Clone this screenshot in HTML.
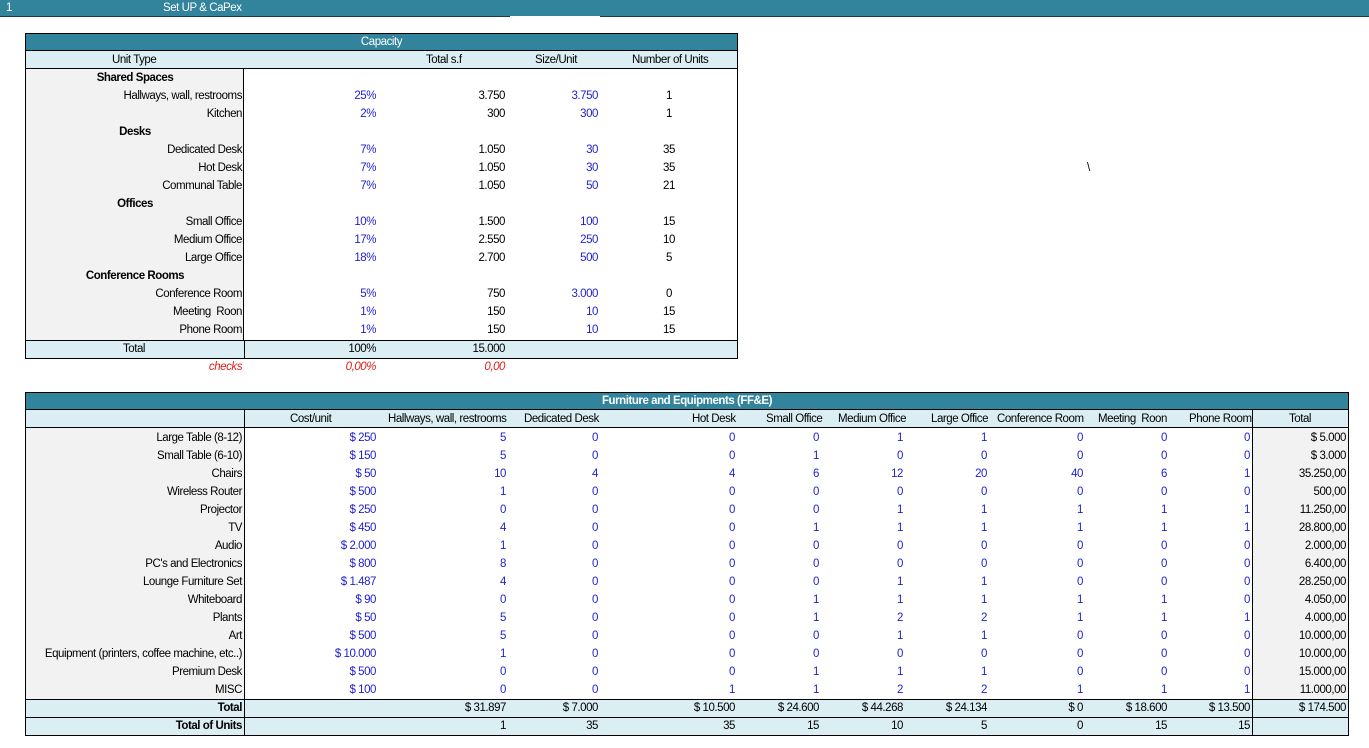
<!DOCTYPE html>
<html><head><meta charset="utf-8"><style>
*{margin:0;padding:0;box-sizing:border-box}
body{width:1369px;height:748px;background:#fff;position:relative;overflow:hidden;font-family:"Liberation Sans",Arial,sans-serif;font-size:11.5px;letter-spacing:-0.45px;color:#000}
.a{position:absolute}
.r{position:absolute;left:0;width:1369px;height:18px;line-height:18px}
.r span{position:absolute;white-space:nowrap}
.b{color:#1f1fd0}
.lab{right:1127px}
.sec{left:25px;width:220px;text-align:center;font-weight:bold}
.p1{right:993px}.p2{right:864px}.p3{right:771px}.p4{left:629px;width:80px;text-align:center}
.f1{right:993px}.f2{right:863px}.f3{right:771px}.f4{right:634px}.f5{right:550px}.f6{right:466px}.f7{right:382px}.f8{right:286px}.f9{right:202px}.f10{right:119px}.f11{right:23px}
</style></head><body>
<div class="a" style="left:0;top:0;width:1369px;height:17px;background:#31849b;border-bottom:1px solid #1a3a44"></div>
<div class="a" style="left:510px;top:16px;width:90px;height:2px;background:#fff"></div>
<div class="a" style="left:6px;top:0;line-height:17px;color:#fff">1</div>
<div class="a" style="left:163px;top:0;line-height:17px;color:#fff">Set UP &amp; CaPex</div>

<!-- Capacity -->
<div class="a" style="left:25px;top:33px;width:713px;height:326px;border:1px solid #000"></div>
<div class="a" style="left:26px;top:34px;width:711px;height:17px;background:#31849b;color:#fff;text-align:center;line-height:17px;border-bottom:1px solid #000">Capacity</div>
<div class="a" style="left:26px;top:51px;width:711px;height:18px;background:#daeef3;border-bottom:1px solid #000"></div>
<div class="a" style="left:26px;top:69px;width:218px;height:271px;background:#f2f2f2;border-right:1px solid #000"></div>
<div class="a" style="left:26px;top:340px;width:711px;height:18px;background:#daeef3;border-top:1px solid #000"></div>
<div class="a" style="left:244px;top:340px;width:1px;height:18px;background:#000"></div>
<div class="r" style="top:51px"><span style="left:112px">Unit Type</span><span style="left:426px">Total s.f</span><span style="left:535px">Size/Unit</span><span style="left:632px">Number of Units</span></div>
<div class="r" style="top:69px"><span class="sec">Shared Spaces</span></div>
<div class="r" style="top:87px"><span class="lab">Hallways, wall, restrooms</span><span class="p1 b">25%</span><span class="p2">3.750</span><span class="p3 b">3.750</span><span class="p4">1</span></div>
<div class="r" style="top:105px"><span class="lab">Kitchen</span><span class="p1 b">2%</span><span class="p2">300</span><span class="p3 b">300</span><span class="p4">1</span></div>
<div class="r" style="top:123px"><span class="sec">Desks</span></div>
<div class="r" style="top:141px"><span class="lab">Dedicated Desk</span><span class="p1 b">7%</span><span class="p2">1.050</span><span class="p3 b">30</span><span class="p4">35</span></div>
<div class="r" style="top:159px"><span class="lab">Hot Desk</span><span class="p1 b">7%</span><span class="p2">1.050</span><span class="p3 b">30</span><span class="p4">35</span><span style="left:1087px">\</span></div>
<div class="r" style="top:177px"><span class="lab">Communal Table</span><span class="p1 b">7%</span><span class="p2">1.050</span><span class="p3 b">50</span><span class="p4">21</span></div>
<div class="r" style="top:195px"><span class="sec">Offices</span></div>
<div class="r" style="top:213px"><span class="lab">Small Office</span><span class="p1 b">10%</span><span class="p2">1.500</span><span class="p3 b">100</span><span class="p4">15</span></div>
<div class="r" style="top:231px"><span class="lab">Medium Office</span><span class="p1 b">17%</span><span class="p2">2.550</span><span class="p3 b">250</span><span class="p4">10</span></div>
<div class="r" style="top:249px"><span class="lab">Large Office</span><span class="p1 b">18%</span><span class="p2">2.700</span><span class="p3 b">500</span><span class="p4">5</span></div>
<div class="r" style="top:267px"><span class="sec">Conference Rooms</span></div>
<div class="r" style="top:285px"><span class="lab">Conference Room</span><span class="p1 b">5%</span><span class="p2">750</span><span class="p3 b">3.000</span><span class="p4">0</span></div>
<div class="r" style="top:303px"><span class="lab">Meeting &nbsp;Roon</span><span class="p1 b">1%</span><span class="p2">150</span><span class="p3 b">10</span><span class="p4">15</span></div>
<div class="r" style="top:321px"><span class="lab">Phone Room</span><span class="p1 b">1%</span><span class="p2">150</span><span class="p3 b">10</span><span class="p4">15</span></div>
<div class="r" style="top:340px"><span style="left:123px">Total</span><span class="p1">100%</span><span class="p2">15.000</span></div>
<div class="r" style="top:358px;color:#e0201c;font-style:italic"><span class="lab">checks</span><span class="p1">0,00%</span><span class="p2">0,00</span></div>

<!-- FF&E -->
<div class="a" style="left:25px;top:392px;width:1324px;height:344px;border:1px solid #000"></div>
<div class="a" style="left:26px;top:393px;width:1322px;height:17px;background:#31849b;color:#fff;text-align:center;line-height:17px;font-weight:bold;border-bottom:1px solid #000">Furniture and Equipments (FF&amp;E)</div>
<div class="a" style="left:26px;top:410px;width:1322px;height:18px;background:#daeef3;border-bottom:1px solid #000"></div>
<div class="a" style="left:26px;top:428px;width:218px;height:271px;background:#f2f2f2"></div>
<div class="a" style="left:1253px;top:428px;width:95px;height:271px;background:#f2f2f2"></div>
<div class="a" style="left:26px;top:699px;width:1322px;height:36px;background:#daeef3;border-top:1px solid #000"></div>
<div class="a" style="left:26px;top:717px;width:1322px;height:1px;background:#000"></div>
<div class="a" style="left:244px;top:410px;width:1px;height:325px;background:#000"></div>
<div class="a" style="left:1252px;top:410px;width:1px;height:325px;background:#000"></div>
<div class="r" style="top:410px"><span style="left:290px">Cost/unit</span><span style="left:388px">Hallways, wall, restrooms</span><span style="left:524px">Dedicated Desk</span><span style="left:692px">Hot Desk</span><span style="left:766px">Small Office</span><span style="left:838px">Medium Office</span><span style="left:931px">Large Office</span><span style="left:997px">Conference Room</span><span style="left:1098px">Meeting &nbsp;Roon</span><span style="left:1189px">Phone Room</span><span style="left:1289px">Total</span></div>
<div class="r" style="top:429px"><span class="lab">Large Table (8-12)</span><span class="f1 b">$ 250</span><span class="f2 b">5</span><span class="f3 b">0</span><span class="f4 b">0</span><span class="f5 b">0</span><span class="f6 b">1</span><span class="f7 b">1</span><span class="f8 b">0</span><span class="f9 b">0</span><span class="f10 b">0</span><span class="f11">$ 5.000</span></div>
<div class="r" style="top:447px"><span class="lab">Small Table (6-10)</span><span class="f1 b">$ 150</span><span class="f2 b">5</span><span class="f3 b">0</span><span class="f4 b">0</span><span class="f5 b">1</span><span class="f6 b">0</span><span class="f7 b">0</span><span class="f8 b">0</span><span class="f9 b">0</span><span class="f10 b">0</span><span class="f11">$ 3.000</span></div>
<div class="r" style="top:465px"><span class="lab">Chairs</span><span class="f1 b">$ 50</span><span class="f2 b">10</span><span class="f3 b">4</span><span class="f4 b">4</span><span class="f5 b">6</span><span class="f6 b">12</span><span class="f7 b">20</span><span class="f8 b">40</span><span class="f9 b">6</span><span class="f10 b">1</span><span class="f11">35.250,00</span></div>
<div class="r" style="top:483px"><span class="lab">Wireless Router</span><span class="f1 b">$ 500</span><span class="f2 b">1</span><span class="f3 b">0</span><span class="f4 b">0</span><span class="f5 b">0</span><span class="f6 b">0</span><span class="f7 b">0</span><span class="f8 b">0</span><span class="f9 b">0</span><span class="f10 b">0</span><span class="f11">500,00</span></div>
<div class="r" style="top:501px"><span class="lab">Projector</span><span class="f1 b">$ 250</span><span class="f2 b">0</span><span class="f3 b">0</span><span class="f4 b">0</span><span class="f5 b">0</span><span class="f6 b">1</span><span class="f7 b">1</span><span class="f8 b">1</span><span class="f9 b">1</span><span class="f10 b">1</span><span class="f11">11.250,00</span></div>
<div class="r" style="top:519px"><span class="lab">TV</span><span class="f1 b">$ 450</span><span class="f2 b">4</span><span class="f3 b">0</span><span class="f4 b">0</span><span class="f5 b">1</span><span class="f6 b">1</span><span class="f7 b">1</span><span class="f8 b">1</span><span class="f9 b">1</span><span class="f10 b">1</span><span class="f11">28.800,00</span></div>
<div class="r" style="top:537px"><span class="lab">Audio</span><span class="f1 b">$ 2.000</span><span class="f2 b">1</span><span class="f3 b">0</span><span class="f4 b">0</span><span class="f5 b">0</span><span class="f6 b">0</span><span class="f7 b">0</span><span class="f8 b">0</span><span class="f9 b">0</span><span class="f10 b">0</span><span class="f11">2.000,00</span></div>
<div class="r" style="top:555px"><span class="lab">PC's and Electronics</span><span class="f1 b">$ 800</span><span class="f2 b">8</span><span class="f3 b">0</span><span class="f4 b">0</span><span class="f5 b">0</span><span class="f6 b">0</span><span class="f7 b">0</span><span class="f8 b">0</span><span class="f9 b">0</span><span class="f10 b">0</span><span class="f11">6.400,00</span></div>
<div class="r" style="top:573px"><span class="lab">Lounge Furniture Set</span><span class="f1 b">$ 1.487</span><span class="f2 b">4</span><span class="f3 b">0</span><span class="f4 b">0</span><span class="f5 b">0</span><span class="f6 b">1</span><span class="f7 b">1</span><span class="f8 b">0</span><span class="f9 b">0</span><span class="f10 b">0</span><span class="f11">28.250,00</span></div>
<div class="r" style="top:591px"><span class="lab">Whiteboard</span><span class="f1 b">$ 90</span><span class="f2 b">0</span><span class="f3 b">0</span><span class="f4 b">0</span><span class="f5 b">1</span><span class="f6 b">1</span><span class="f7 b">1</span><span class="f8 b">1</span><span class="f9 b">1</span><span class="f10 b">0</span><span class="f11">4.050,00</span></div>
<div class="r" style="top:609px"><span class="lab">Plants</span><span class="f1 b">$ 50</span><span class="f2 b">5</span><span class="f3 b">0</span><span class="f4 b">0</span><span class="f5 b">1</span><span class="f6 b">2</span><span class="f7 b">2</span><span class="f8 b">1</span><span class="f9 b">1</span><span class="f10 b">1</span><span class="f11">4.000,00</span></div>
<div class="r" style="top:627px"><span class="lab">Art</span><span class="f1 b">$ 500</span><span class="f2 b">5</span><span class="f3 b">0</span><span class="f4 b">0</span><span class="f5 b">0</span><span class="f6 b">1</span><span class="f7 b">1</span><span class="f8 b">0</span><span class="f9 b">0</span><span class="f10 b">0</span><span class="f11">10.000,00</span></div>
<div class="r" style="top:645px"><span class="lab">Equipment (printers, coffee machine, etc..)</span><span class="f1 b">$ 10.000</span><span class="f2 b">1</span><span class="f3 b">0</span><span class="f4 b">0</span><span class="f5 b">0</span><span class="f6 b">0</span><span class="f7 b">0</span><span class="f8 b">0</span><span class="f9 b">0</span><span class="f10 b">0</span><span class="f11">10.000,00</span></div>
<div class="r" style="top:663px"><span class="lab">Premium Desk</span><span class="f1 b">$ 500</span><span class="f2 b">0</span><span class="f3 b">0</span><span class="f4 b">0</span><span class="f5 b">1</span><span class="f6 b">1</span><span class="f7 b">1</span><span class="f8 b">0</span><span class="f9 b">0</span><span class="f10 b">0</span><span class="f11">15.000,00</span></div>
<div class="r" style="top:681px"><span class="lab">MISC</span><span class="f1 b">$ 100</span><span class="f2 b">0</span><span class="f3 b">0</span><span class="f4 b">1</span><span class="f5 b">1</span><span class="f6 b">2</span><span class="f7 b">2</span><span class="f8 b">1</span><span class="f9 b">1</span><span class="f10 b">1</span><span class="f11">11.000,00</span></div>
<div class="r" style="top:699px"><span class="lab" style="font-weight:bold">Total</span><span class="f2">$ 31.897</span><span class="f3">$ 7.000</span><span class="f4">$ 10.500</span><span class="f5">$ 24.600</span><span class="f6">$ 44.268</span><span class="f7">$ 24.134</span><span class="f8">$ 0</span><span class="f9">$ 18.600</span><span class="f10">$ 13.500</span><span class="f11">$ 174.500</span></div>
<div class="r" style="top:717px"><span class="lab" style="font-weight:bold">Total of Units</span><span class="f2">1</span><span class="f3">35</span><span class="f4">35</span><span class="f5">15</span><span class="f6">10</span><span class="f7">5</span><span class="f8">0</span><span class="f9">15</span><span class="f10">15</span></div>
</body></html>
